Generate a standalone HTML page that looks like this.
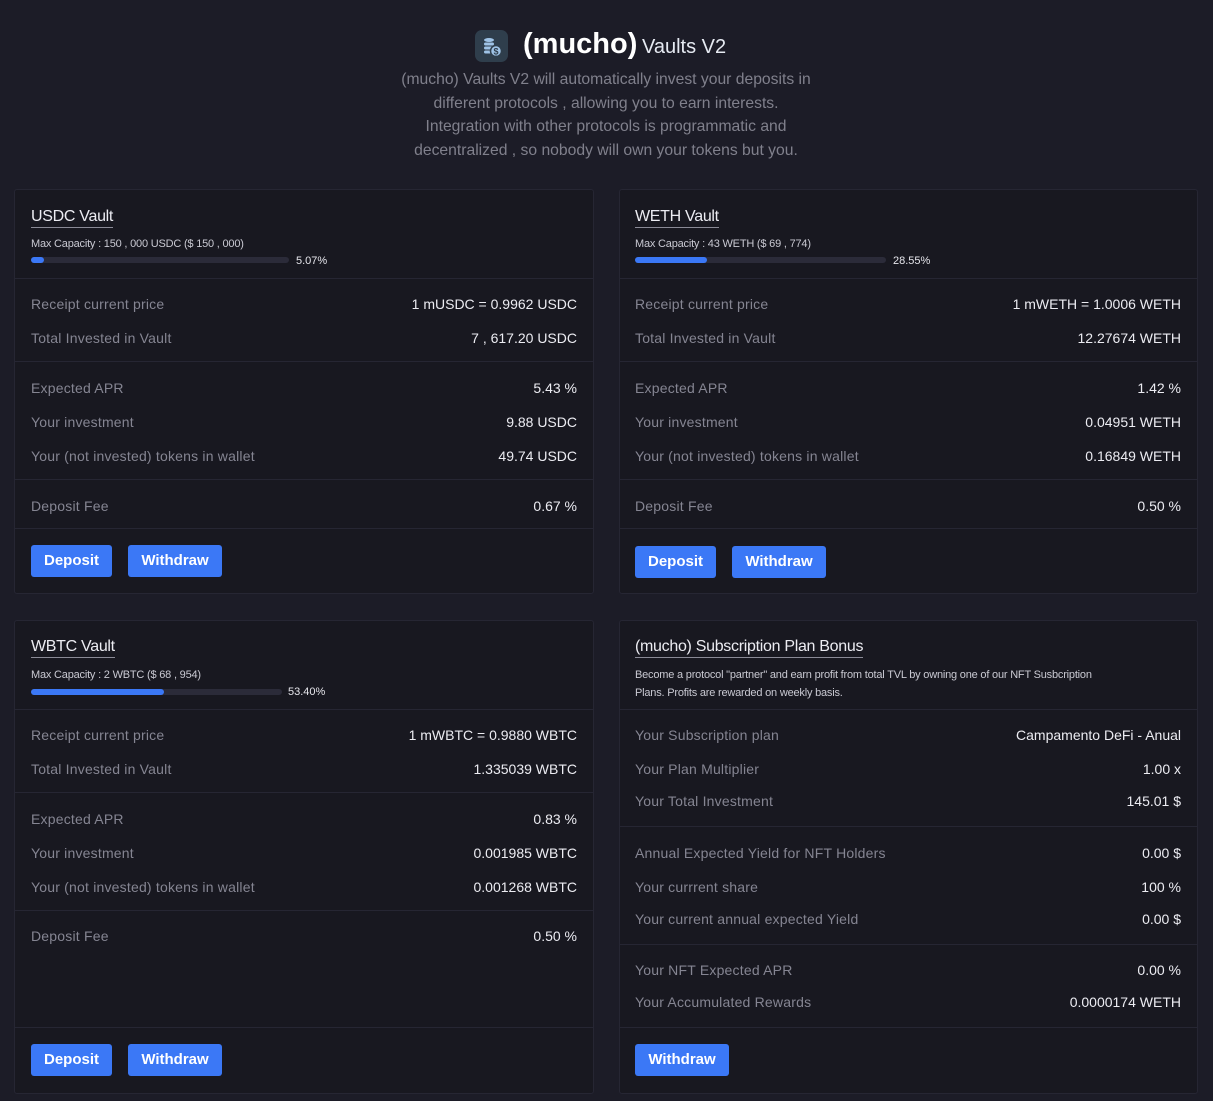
<!DOCTYPE html>
<html><head><meta charset="utf-8"><style>
*{margin:0;padding:0;box-sizing:border-box}
body{width:1213px;height:1101px;background:#1c1c27;font-family:"Liberation Sans",sans-serif;position:relative;overflow:hidden;color:#e6e6ec}
.card{position:absolute;background:#181820;border:1px solid #262633;border-radius:3px}
.t{position:absolute;left:16px;font-size:16px;color:#ececf2;border-bottom:1px solid #8a8a96;line-height:20px;letter-spacing:-0.3px}
.cap{position:absolute;left:16px;font-size:11px;color:#c9c9d2;line-height:14px;letter-spacing:-0.2px}
.bar{position:absolute;left:16px;height:6px;background:#2b2b39;border-radius:3px}
.bar i{position:absolute;left:0;top:0;height:6px;background:#3b78f6;border-radius:3px}
.pct{position:absolute;font-size:11px;color:#e6e6ec;line-height:14px}
.d{position:absolute;left:0;right:0;height:1px;background:#262633}
.r{position:absolute;left:16px;right:16px;height:20px;line-height:20px;font-size:14px}
.rc .r,.rc .t,.rc .cap,.rc .bar{left:15px}
.r span{color:#858592;float:left;letter-spacing:0.2px}
.r b{font-weight:normal;color:#ececf2;float:right}
.btn{position:absolute;height:32px;line-height:32px;background:#3b78f6;color:#fff;font-weight:bold;font-size:15px;border-radius:3px;text-align:center}
</style></head><body>

<div style="position:absolute;left:475px;top:30px;width:33px;height:32px;background:#2f3e4c;border-radius:7px">
<svg width="33" height="32" viewBox="0 0 33 32"><g fill="#9fc3e6"><ellipse cx="14" cy="10" rx="5" ry="2"/><rect x="9" y="12.5" width="10" height="3" rx="1.5"/><rect x="9" y="16.5" width="10" height="3" rx="1.5"/><rect x="9" y="20.5" width="8" height="3" rx="1.5"/></g><circle cx="21" cy="21" r="5.5" fill="#9fc3e6" stroke="#2f3e4c" stroke-width="1.5"/><text x="21" y="24.5" font-size="9" font-weight="bold" text-anchor="middle" fill="#2f3e4c" font-family="Liberation Sans">$</text></svg></div>
<div style="position:absolute;left:523px;top:27px;font-size:29px;font-weight:bold;color:#fff;line-height:34px">(mucho)</div>
<div style="position:absolute;left:642px;top:35px;font-size:20px;color:#e6eaf2;line-height:24px">Vaults V2</div>
<div style="position:absolute;left:290px;width:632px;top:68px;text-align:center;font-size:15.7px;line-height:23.7px;color:#80808c">(mucho) Vaults V2 will automatically invest your deposits in<br>different protocols , allowing you to earn interests.<br>Integration with other protocols is programmatic and<br>decentralized , so nobody will own your tokens but you.</div>

<!-- USDC -->
<div class="card" style="left:14px;top:189px;width:580px;height:405px">
<div class="t" style="top:17px">USDC Vault</div>
<div class="cap" style="top:47px">Max Capacity : 150 , 000 USDC ($ 150 , 000)</div>
<div class="bar" style="top:67px;width:258px"><i style="width:13px"></i></div>
<div class="pct" style="left:281px;top:64px">5.07%</div>
<div class="d" style="top:88px"></div>
<div class="r" style="top:104px"><span>Receipt current price</span><b>1 mUSDC = 0.9962 USDC</b></div>
<div class="r" style="top:138px"><span>Total Invested in Vault</span><b>7 , 617.20 USDC</b></div>
<div class="d" style="top:171px"></div>
<div class="r" style="top:188px"><span>Expected APR</span><b>5.43 %</b></div>
<div class="r" style="top:222px"><span>Your investment</span><b>9.88 USDC</b></div>
<div class="r" style="top:256px"><span>Your (not invested) tokens in wallet</span><b>49.74 USDC</b></div>
<div class="d" style="top:289px"></div>
<div class="r" style="top:306px"><span>Deposit Fee</span><b>0.67 %</b></div>
<div class="d" style="top:338px"></div>
<div class="btn" style="left:16px;top:355px;width:81px">Deposit</div>
<div class="btn" style="left:113px;top:355px;width:94px">Withdraw</div>
</div>

<!-- WETH -->
<div class="card rc" style="left:619px;top:189px;width:579px;height:405px">
<div class="t" style="top:17px">WETH Vault</div>
<div class="cap" style="top:47px">Max Capacity : 43 WETH ($ 69 , 774)</div>
<div class="bar" style="top:67px;width:251px"><i style="width:72px"></i></div>
<div class="pct" style="left:273px;top:64px">28.55%</div>
<div class="d" style="top:88px"></div>
<div class="r" style="top:104px"><span>Receipt current price</span><b>1 mWETH = 1.0006 WETH</b></div>
<div class="r" style="top:138px"><span>Total Invested in Vault</span><b>12.27674 WETH</b></div>
<div class="d" style="top:171px"></div>
<div class="r" style="top:188px"><span>Expected APR</span><b>1.42 %</b></div>
<div class="r" style="top:222px"><span>Your investment</span><b>0.04951 WETH</b></div>
<div class="r" style="top:256px"><span>Your (not invested) tokens in wallet</span><b>0.16849 WETH</b></div>
<div class="d" style="top:289px"></div>
<div class="r" style="top:306px"><span>Deposit Fee</span><b>0.50 %</b></div>
<div class="d" style="top:338px"></div>
<div class="btn" style="left:15px;top:356px;width:81px">Deposit</div>
<div class="btn" style="left:112px;top:356px;width:94px">Withdraw</div>
</div>

<!-- WBTC -->
<div class="card" style="left:14px;top:620px;width:580px;height:474px">
<div class="t" style="top:16px">WBTC Vault</div>
<div class="cap" style="top:47px">Max Capacity : 2 WBTC ($ 68 , 954)</div>
<div class="bar" style="top:68px;width:251px"><i style="width:133px"></i></div>
<div class="pct" style="left:273px;top:64px">53.40%</div>
<div class="d" style="top:88px"></div>
<div class="r" style="top:104px"><span>Receipt current price</span><b>1 mWBTC = 0.9880 WBTC</b></div>
<div class="r" style="top:138px"><span>Total Invested in Vault</span><b>1.335039 WBTC</b></div>
<div class="d" style="top:171px"></div>
<div class="r" style="top:188px"><span>Expected APR</span><b>0.83 %</b></div>
<div class="r" style="top:222px"><span>Your investment</span><b>0.001985 WBTC</b></div>
<div class="r" style="top:256px"><span>Your (not invested) tokens in wallet</span><b>0.001268 WBTC</b></div>
<div class="d" style="top:289px"></div>
<div class="r" style="top:305px"><span>Deposit Fee</span><b>0.50 %</b></div>
<div class="d" style="top:406px"></div>
<div class="btn" style="left:16px;top:423px;width:81px">Deposit</div>
<div class="btn" style="left:113px;top:423px;width:94px">Withdraw</div>
</div>

<!-- Subscription -->
<div class="card rc" style="left:619px;top:620px;width:579px;height:474px">
<div class="t" style="top:16px">(mucho) Subscription Plan Bonus</div>
<div class="cap" style="top:46px;line-height:17.5px;width:546px">Become a protocol "partner" and earn profit from total TVL by owning one of our NFT Susbcription<br>Plans. Profits are rewarded on weekly basis.</div>
<div class="d" style="top:88px"></div>
<div class="r" style="top:104px"><span>Your Subscription plan</span><b>Campamento DeFi - Anual</b></div>
<div class="r" style="top:138px"><span>Your Plan Multiplier</span><b>1.00 x</b></div>
<div class="r" style="top:170px"><span>Your Total Investment</span><b>145.01 $</b></div>
<div class="d" style="top:205px"></div>
<div class="r" style="top:222px"><span>Annual Expected Yield for NFT Holders</span><b>0.00 $</b></div>
<div class="r" style="top:256px"><span>Your currrent share</span><b>100 %</b></div>
<div class="r" style="top:288px"><span>Your current annual expected Yield</span><b>0.00 $</b></div>
<div class="d" style="top:323px"></div>
<div class="r" style="top:339px"><span>Your NFT Expected APR</span><b>0.00 %</b></div>
<div class="r" style="top:371px"><span>Your Accumulated Rewards</span><b>0.0000174 WETH</b></div>
<div class="d" style="top:406px"></div>
<div class="btn" style="left:15px;top:423px;width:94px">Withdraw</div>
</div>
</body></html>
